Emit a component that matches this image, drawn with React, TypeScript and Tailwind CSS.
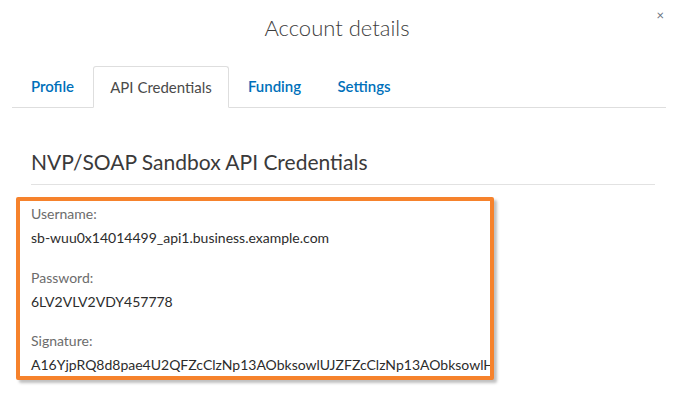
import { useState } from "react";

const tabs = [
  { name: "Profile", width: "w-[81px]" },
  { name: "API Credentials", width: "w-[136px]" },
  { name: "Funding", width: "w-[91px]" },
  { name: "Settings", width: "w-[88px]" },
];

const fields = [
  { label: "Username:", value: "sb-wuu0x14014499_api1.business.example.com" },
  { label: "Password:", value: "6LV2VLV2VDY457778" },
  {
    label: "Signature:",
    value: "A16YjpRQ8d8pae4U2QFZcClzNp13AObksowlUJZFZcClzNp13AObksowlHxQ2",
  },
];

export default function App() {
  const [active, setActive] = useState("API Credentials");

  return (
    <div className="relative w-[674px] h-[393px] bg-white overflow-hidden font-['Lato',sans-serif]">
      <button className="absolute right-[10px] top-[9px] text-[13px] leading-none text-gray-500">×</button>

      <div className="h-[66px] flex justify-center pt-[14px]">
        <h1 className="text-[22px] font-light text-[#3d3d3d] leading-[28px]">Account details</h1>
      </div>

      <div className="ml-[12px] w-[654px] h-[42px] flex items-end border-b border-[#dedede]">
        {tabs.map((tab) => {
          const isActive = tab.name === active;
          return (
            <button
              key={tab.name}
              onClick={() => setActive(tab.name)}
              className={
                isActive
                  ? `${tab.width} h-[42px] -mb-px flex items-center justify-center bg-white border border-b-white border-[#dedede] rounded-t-[3px] text-[15px] text-[#4a4a4a]`
                  : `${tab.width} h-[42px] flex items-center justify-center text-[15px] font-semibold text-[#0070ba]`
              }
            >
              {tab.name}
            </button>
          );
        })}
      </div>

      <div className="ml-[31px] w-[624px] mt-[40px] border-b border-[#e2e2e2] pb-[9px]">
        <h2 className="text-[21px] text-[#3a3a3a] leading-[27px]">NVP/SOAP Sandbox API Credentials</h2>
      </div>

      <div className="ml-[16px] mt-[12px] w-[478px] h-[183px] border-4 border-[#f6822c] rounded-[2px] bg-white shadow-[3px_3px_3px_rgba(0,0,0,0.25)] overflow-hidden px-[11px] pt-[1px]">
        {fields.map((f) => (
          <div key={f.label} className="h-[63.5px]">
            <div className="text-[14px] leading-[24px] text-[#6c6c6c]">{f.label}</div>
            <div className="text-[14px] leading-[24px] text-[#2c2c2c] whitespace-nowrap">{f.value}</div>
          </div>
        ))}
      </div>
    </div>
  );
}
